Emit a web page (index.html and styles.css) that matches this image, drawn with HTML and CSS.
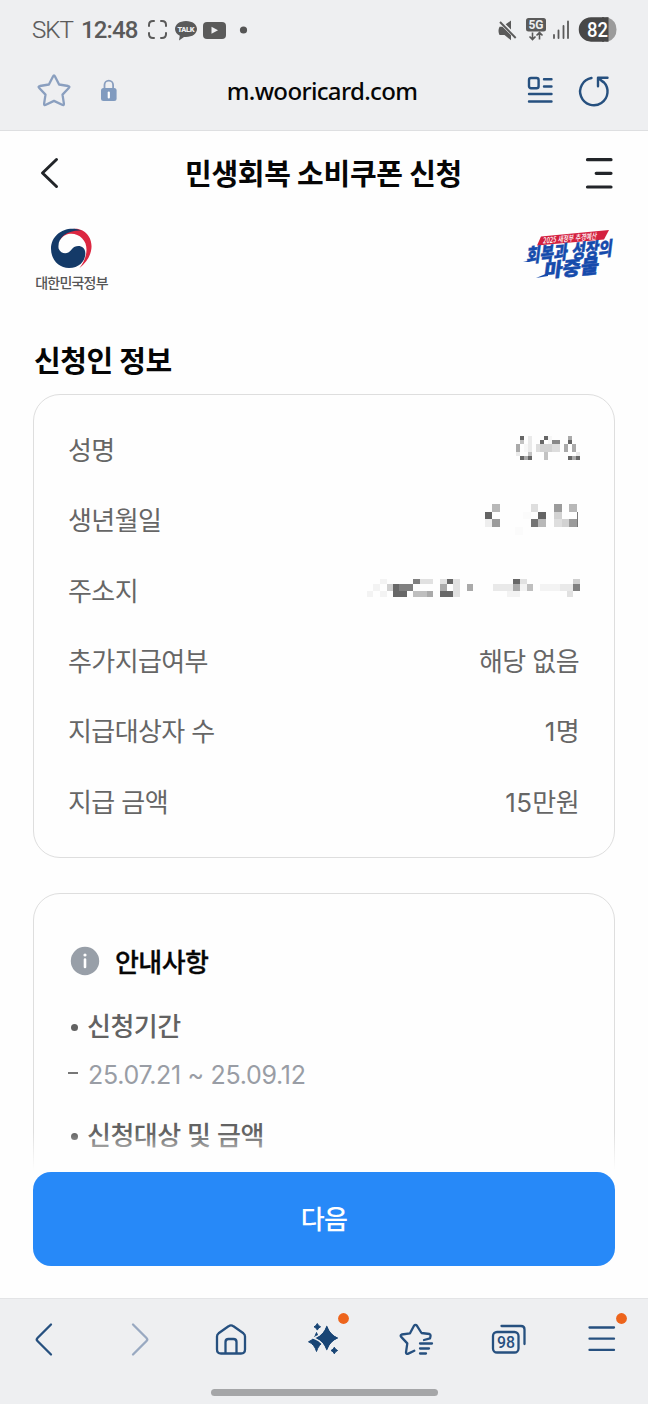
FILE: index.html
```html
<!DOCTYPE html>
<html lang="ko">
<head>
<meta charset="utf-8">
<title>민생회복 소비쿠폰 신청</title>
<link rel="stylesheet" href="styles.css">
</head>
<body>
<div class="phone">
  <header class="browser-top">
    <div class="status">
      <span class="carrier">SKT</span>
      <span class="clock">12:48</span>
      <svg class="status-icons" width="104" height="28" viewBox="0 0 104 28">
        <g fill="none" stroke="#5a5a5a" stroke-width="2" stroke-linecap="round">
          <path d="M2 10V9q0-4 4-4h1M14 5h1q4 0 4 4v1M19 17v1q0 4-4 4h-1M7 22H6q-4 0-4-4v-1"/>
        </g>
        <path d="M39 5c-6.500 0-11 3.600-11 8 0 3 2 5.300 4.800 6.700L32 24.500l5-3.600 2 .1c6.500 0 11-3.600 11-8s-4.500-8-11-8z" fill="#5a5a5a"/>
        <text class="talk" x="39" y="15.500" text-anchor="middle" textLength="17">TALK</text>
        <rect x="56" y="6" width="23" height="17" rx="4" fill="#5a5a5a"/>
        <path d="M64.500 10.800v7l6.500-3.500z" fill="#eeeff1"/>
        <circle cx="96.500" cy="14" r="3.600" fill="#555"/>
      </svg>
      <svg class="status-right" width="120" height="28" viewBox="0 0 120 28">
        <path d="M1.500 10.800h3l8.500 8.500v4.900l-6.500-5.200H1.500Q-.5 15 1.500 10.800zM7.700 8.300L13 4.500v9z" fill="#5a5a5a"/>
        <path d="M2 6l15.700 16" stroke="#5a5a5a" stroke-width="1.900"/>
        <rect x="28" y="2" width="20" height="13.500" rx="2.500" fill="#5a5a5a"/>
        <text class="fiveg" x="38" y="13" text-anchor="middle" textLength="15">5G</text>
        <path d="M34.500 16.500v7M31.500 20.500l3 3 3-3M41.500 23.500v-7M38.500 19.500l3-3 3 3" fill="none" stroke="#5a5a5a" stroke-width="1.600"/>
        <path d="M56 19v3M60.500 14.500V22M65.500 10v12M70 5.500V22" stroke="#5a5a5a" stroke-width="1.800" stroke-linecap="round"/>
        <path d="M93 1.200h13v24.500H93a12.250 12.250 0 0 1 0-24.500z" fill="#484848"/>
        <path d="M110 1.400q8.500 3 8.500 12T110 25.500h-2V1.400z" fill="#9b9b9b"/>
        <rect x="104" y="1.200" width="6.500" height="24.500" fill="#484848"/>
        <text class="battery" x="99.500" y="20.700" text-anchor="middle" textLength="21" lengthAdjust="spacingAndGlyphs">82</text>
      </svg>
    </div>
    <div class="address">
      <svg width="90" height="40" viewBox="0 0 90 40">
        <path d="M18 6.500q1-2 2 0l4.100 8 9 1.500q2.200.5.700 2l-6.300 6.600 1.400 9q.2 2.200-1.800 1.200L19 30.900l-8.100 3.900q-2 1-1.800-1.200l1.400-9-6.300-6.600q-1.500-1.500.7-2l9-1.500z" fill="none" stroke="#8a9fbf" stroke-width="2.300" stroke-linejoin="round"/>
        <path d="M69.500 18.500V15a4.300 4.300 0 0 1 8.600 0v3.500" fill="none" stroke="#8a9fbf" stroke-width="1.800"/>
        <rect x="66" y="18" width="15.600" height="13" rx="2.500" fill="#819bbf"/>
        <path d="M73.800 22.500v5" stroke="#fff" stroke-width="2.200" stroke-linecap="round"/>
      </svg>
      <span class="url">m.wooricard.com</span>
      <svg width="90" height="40" viewBox="0 0 90 40">
        <g fill="none" stroke="#26507f" stroke-width="2.400" stroke-linecap="round" stroke-linejoin="round">
          <rect x="4" y="8" width="9.600" height="10.200" rx="2"/>
          <path d="M19 9.200h7.500M19 16.500h7.500M4 24h22.500M4 31.500h22.500"/>
          <path d="M66.500 8a13.700 13.700 0 1 0 12 3.800M82.500 7.800h-9.500v8.500M73.300 8l4.800 4"/>
        </g>
      </svg>
    </div>
  </header>

  <main class="content">
    <div class="title-bar">
      <svg width="24" height="40" viewBox="0 0 24 40"><path d="M18.500 5.500L4.500 19l14 13.500" fill="none" stroke="#222529" stroke-width="3" stroke-linecap="round" stroke-linejoin="round"/></svg>
      <h1 class="title">민생회복 소비쿠폰 신청</h1>
      <svg width="30" height="40" viewBox="0 0 30 40"><path d="M2.500 5.700H26M11.200 19.300H26M2.500 33H26" stroke="#222529" stroke-width="3.200" stroke-linecap="round"/></svg>
    </div>

    <div class="logos">
      <div class="gov">
        <svg width="43" height="42" viewBox="150 291 129 126">
          <path d="M190 304C214 291 232 291 246 298C281 315 290 370 238 412C263 380 267 342 246 322C229 304 197 302 180 327C178 317 183 309 190 304Z" fill="#dc2741"/>
          <path d="M244 299C202 281 153 308 153 353C153 388 178 411 207 411C237 411 256 391 256 367C256 341 226 340 216 354C204 372 184 370 176 353C170 319 205 296 244 299Z" fill="#143a68"/>
        </svg>
        <span class="gov-name">대한민국정부</span>
      </div>
      <svg class="campaign" width="94" height="56" viewBox="0 0 94 56">
        <path d="M19 8.500L87 2l-5 9.500L15 17.500z" fill="#d4203e"/>
        <g transform="rotate(-5 50 30) skewX(-12)">
          <text class="camp-sub" x="25" y="13" textLength="54" lengthAdjust="spacingAndGlyphs">2025 새정부 추경예산</text>
          <text class="camp-main" x="10.500" y="30.500" textLength="86" lengthAdjust="spacingAndGlyphs">회복과 성장의</text>
          <text class="camp-main" x="30" y="47" textLength="55" lengthAdjust="spacingAndGlyphs">마중물</text>
        </g>
        <path d="M1 34l9-2-3 2zM14 50l12-2v-3z" fill="#164bac"/>
      </svg>
    </div>

    <h2 class="section-title">신청인 정보</h2>
    <dl class="card info">
      <div class="row"><dt>성명</dt><dd>
        <svg class="mosaic" viewBox="0 -15 693 210">
          <path d="M510 47h12v12h-12zM510 107h12v12h-12zM534 107h12v12h-12zM582 47h12v12h-12zM570 60h12v12h-12zM654 60h12v12h-12zM654 107h12v12h-12zM678 107h12v12h-12z" fill="#666"/>
          <path d="M606 60h24v12h-24z" fill="#888"/>
          <path d="M498 72h12v24h-12zM522 107h12v12h-12zM642 72h12v24h-12zM666 72h12v24h-12zM654 47h12v12h-12zM666 107h12v12h-12z" fill="#aaa"/>
          <path d="M510 60h12v12h-12zM534 96h12v12h-12zM582 96h12v24h-12z" fill="#c2c2c2"/>
          <path d="M558 72h72v24h-72z" fill="#ddd"/><path d="M570 72h36v24h-36z" fill="#d2d2d2"/>
          <path d="M534 47h12v49h-12zM498 96h12v12h-12zM678 96h12v12h-12z" fill="#eaeaea"/><path d="M522 72h12v24h-12zM594 47h12v25h-12z" fill="#f7f7f7"/>
        </svg></dd></div>
      <div class="row"><dt>생년월일</dt><dd>
        <svg class="mosaic" viewBox="0 196 693 210">
          <path d="M405 276h21v21h-21zM564 276h24v21h-24z" fill="#646464"/>
          <path d="M543 297h21v24h-21z" fill="#747474"/>
          <path d="M426 297h24v24h-24zM612 252h24v24h-24zM657 297h27v24h-27z" fill="#9b9b9b"/>
          <path d="M426 252h24v24h-24zM564 297h24v24h-24zM657 252h24v24h-24z" fill="#b8b8b8"/>
          <path d="M612 276h24v21h-24zM636 297h21v24h-21z" fill="#d2d2d2"/>
          <path d="M543 252h21v24h-21zM612 297h24v24h-24z" fill="#dedede"/>
          <path d="M405 297h21v24h-21z" fill="#eee"/><path d="M495 321h24v24h-24zM519 276h24v21h-24z" fill="#fbfbfb"/>
          <path d="M681 276h3v45h-3z" fill="#777"/>
        </svg></dd></div>
      <div class="row"><dt>주소지</dt><dd>
        <svg class="mosaic" viewBox="0 407 693 210">
          <path d="M129 492h60v21h-18v18h-42zM291 477h18v15h-18zM270 513h39v18h-39zM489 477h21v15h-21z" fill="#686868"/>
          <path d="M147 492h42v21h-42zM189 477h21v15h-21zM669 492h21v21h-21z" fill="#808080"/>
          <path d="M231 513h18v18h-18zM270 492h21v21h-21zM351 492h18v21h-18zM489 492h21v21h-21z" fill="#aaa"/>
          <path d="M189 513h42v18h-42zM531 492h18v21h-18z" fill="#bfbfbf"/>
          <path d="M111 492h18v21h-18zM669 477h21v15h-21z" fill="#d0d0d0"/>
          <path d="M210 477h39v15h-39zM270 477h21v15h-21zM309 477h21v54h-21zM510 477h21v15h-21zM651 513h18v18h-18z" fill="#e1e1e1"/>
          <path d="M429 492h60v21h-60zM630 492h39v21h-39z" fill="#e9e9e9"/>
          <path d="M51 513h18v18h-18zM69 492h21v21h-21zM90 477h21v15h-21zM90 513h21v18h-21zM471 513h39v18h-39zM510 492h21v21h-21zM570 492h60v21h-60z" fill="#f3f3f3"/>
        </svg></dd></div>
      <div class="row"><dt>추가지급여부</dt><dd class="value">해당 없음</dd></div>
      <div class="row"><dt>지급대상자 수</dt><dd class="value"><span class="num">1</span>명</dd></div>
      <div class="row"><dt>지급 금액</dt><dd class="value"><span class="num">15</span>만원</dd></div>
    </dl>

    <section class="card notice">
      <div class="notice-head">
        <svg class="info-icon" width="30" height="30" viewBox="0 0 30 30"><circle cx="15" cy="15" r="14.200" fill="#989fa8"/><path d="M15 13.500v7.500" stroke="#fff" stroke-width="2.600" stroke-linecap="round"/><circle cx="15" cy="9" r="1.600" fill="#fff"/></svg>
        <h3 class="notice-title">안내사항</h3>
      </div>
      <p class="topic"><span>신청기간</span></p>
      <p class="period">25.07.21 ~ 25.09.12</p>
      <p class="topic"><span>신청대상 및 금액</span></p>
    </section>

    <div class="action">
      <button class="next" type="button">다음</button>
    </div>
  </main>

  <footer class="browser-bottom">
    <nav class="tools">
      <svg viewBox="0 0 44 44"><path d="M27 7.500L13.500 21q-1.500 1.500 0 3L27 37.500" class="line"/></svg>
      <svg viewBox="0 0 44 44"><path d="M16 7.500L29.500 21q1.500 1.500 0 3L16 37.500" class="line faded"/></svg>
      <svg viewBox="0 0 44 44"><path d="M8 19.500q0-2 1.600-3.200L19.500 9.300q2.500-1.900 5 0l9.900 7q1.600 1.200 1.600 3.200v13q0 4-4 4H12q-4 0-4-4zM16.500 36.500V25q0-3 3-3h5q3 0 3 3v11.500" class="line"/></svg>
      <svg viewBox="0 0 44 44">
        <g fill="#184575">
          <path d="M14.500 15.500Q16.500 22.300 22.500 24.800Q16.500 27.300 14.500 34.500Q12.500 27.300 6.500 24.800Q12.500 22.300 14.500 15.500z" stroke="#184575" stroke-width="1"/>
          <path d="M24.800 8.500Q28 18 36 21Q28 24 24.800 33.500Q21.600 24 13.500 21Q21.600 18 24.800 8.500z" stroke="#eeeff1" stroke-width="3.200" paint-order="stroke"/>
          <path d="M24.800 9.500Q28 18 35.500 21Q28 24 24.800 32.500Q21.600 24 15 21Q21.600 18 24.800 9.500z" stroke="#184575" stroke-width="1"/>
          <path d="M15.300 6.500q1 2.500 3.300 3.300-2.300.8-3.300 3.300-1-2.500-3.300-3.300 2.300-.8 3.300-3.300zM32.300 30.200q1 2.500 3.300 3.300-2.300.8-3.300 3.300-1-2.500-3.300-3.300 2.300-.8 3.300-3.300z" stroke="#184575" stroke-width="1"/>
        </g>
        <circle cx="41.500" cy="1.500" r="5.400" fill="#ed641c"/>
      </svg>
      <svg viewBox="0 0 44 44"><path d="M29 23l6-1.600q1.300-3.800-.5-4.400l-8-1-4.500-7.200q-1.500-2-3 0l-4 7.500-8.300 1.200q-1.800.7-.5 2.400l6.100 6.500-1.300 9q.2 2.200 2.300 1.200l6-2.900M25 26.500h12M25 31.500h9M25 36.500h6" class="line"/></svg>
      <svg viewBox="0 0 44 44"><rect x="6" y="15" width="25.500" height="20.500" rx="4" class="line"/><path d="M14.500 9H34q3.500 0 3.500 3.500V27" class="line"/><text class="tabs" x="19" y="31.300" text-anchor="middle" textLength="18" lengthAdjust="spacingAndGlyphs">98</text></svg>
      <svg viewBox="0 0 44 44"><path d="M9.500 10.500h24.500M9.500 21.700h24.500M9.500 32.900h24.500" class="line"/><circle cx="41.500" cy="1.500" r="5.400" fill="#ed641c"/></svg>
    </nav>
    <div class="handle"></div>
  </footer>
</div>
</body>
</html>
```

FILE: styles.css
```css
* { box-sizing: border-box; margin: 0; padding: 0; }
body { font-family: Inter, "Noto Sans CJK KR", sans-serif; background: #fefefe; }
svg { display: block; flex: none; overflow: visible; }
.phone { width: 648px; height: 1404px; display: flex; flex-direction: column; overflow: hidden; }

.browser-top { height: 131px; background: #eeeff1; border-bottom: 1px solid #dedfe1; flex: none; }
.status { height: 60px; display: flex; align-items: center; padding-left: 32px; padding-right: 30px; color: #5a5a5a; font-family: Roboto, sans-serif; font-size: 24px; line-height: 30px; }
.carrier { width: 49px; font-weight: 300; letter-spacing: -0.9px; -webkit-text-stroke: 0.2px #5a5a5a; }
.clock { width: 66px; font-weight: 500; letter-spacing: -0.9px; }
.status-right { margin-left: auto; }
.talk { font: 900 7.5px Roboto, sans-serif; fill: #eeeff1; }
.fiveg { font: 700 12px Roboto, sans-serif; fill: #eeeff1; }
.battery { font: 500 20px Roboto, sans-serif; fill: #fff; }
.address { height: 60px; display: flex; align-items: center; justify-content: space-between; padding: 0 33px 0 35px; }
.url { font: 500 24px/36px "Noto Sans", sans-serif; color: #060606; letter-spacing: -0.65px; padding: 2px 6px 0 0; }

.content { flex: 1; position: relative; overflow: hidden; padding: 0 33px; }
.title-bar { height: 86px; display: flex; align-items: center; justify-content: space-between; padding-left: 5px; }
.title { font-size: 29px; line-height: 40px; font-weight: 700; letter-spacing: -0.3px; color: #060606; padding-top: 1px; }
.logos { height: 90px; display: flex; justify-content: space-between; padding-top: 11px; }
.gov { width: 77px; display: flex; flex-direction: column; align-items: center; }
.gov-name { font-size: 14px; line-height: 22px; font-weight: 500; color: #555; letter-spacing: -0.8px; margin-top: 2px; white-space: nowrap; }
.campaign { margin-right: -1px; }
.camp-sub { font: 500 8px "Noto Sans CJK KR", sans-serif; fill: #fff; }
.camp-main { font: 900 19px "Noto Sans CJK KR", sans-serif; fill: #164bac; stroke: #164bac; stroke-width: .5px; }
.section-title { margin-top: 35px; padding-left: 1px; font-size: 29px; line-height: 40px; font-weight: 700; letter-spacing: -0.4px; color: #060606; }

.card { border: 1px solid #dedede; border-radius: 27px; }
.info { height: 464px; margin-top: 12px; padding: 20px 34px; }
.row { height: 70.3px; display: flex; align-items: center; justify-content: space-between; font-size: 26px; line-height: 38px; letter-spacing: -0.6px; color: #666; }
.row dt, .value { padding-top: 2px; }
.value { padding-right: 1px; }
.num { letter-spacing: 0.4px; }
.mosaic { width: 231px; height: 70px; margin-right: -1px; shape-rendering: crispEdges; }
.notice { height: 464px; margin-top: 35px; padding: 52px 34px; }
.notice-head { display: flex; align-items: center; gap: 15px; padding-left: 2px; height: 33px; }
.info-icon { margin-bottom: 4px; }
.notice-title { font-size: 26px; line-height: 33px; font-weight: 500; letter-spacing: -0.6px; color: #060606; -webkit-text-stroke: 0.3px #060606; }
.topic { display: flex; align-items: center; height: 40px; margin-top: 27px; padding-left: 3px; font-size: 26px; line-height: 40px; font-weight: 500; letter-spacing: -0.5px; color: #626262; }
.topic span { padding-top: 2px; }
.topic::before { content: ""; width: 7px; height: 7px; border-radius: 50%; background: #626262; margin-right: 9px; margin-top: 3px; }
.period { display: flex; align-items: center; height: 40px; margin-top: 9px; font-size: 25px; line-height: 40px; color: #999da5; letter-spacing: -0.3px; }
.period::before { content: ""; width: 10px; height: 2px; background: #777; margin-right: 10px; margin-top: -4px; }
.period + .topic { margin-top: 20px; }

.action { position: absolute; left: 0; right: 0; bottom: 0; padding: 40px 33px 32px; background: linear-gradient(rgba(254,254,254,0), #fefefe 38px); }
.next { display: block; width: 100%; height: 94.5px; padding-bottom: 2px; border: 0; border-radius: 18px; background: #2789f8; color: #fff; font: 500 26px/38px "Noto Sans CJK KR", sans-serif; letter-spacing: -0.6px; }

.browser-bottom { height: 106px; flex: none; background: #eeeff1; border-top: 1px solid #e3e4e6; }
.tools { height: 80px; display: grid; grid-template-columns: repeat(7, 1fr); align-items: center; justify-items: center; }
.tools svg { width: 44px; height: 44px; }
.line { fill: none; stroke: #26507f; stroke-width: 2.3px; stroke-linecap: round; stroke-linejoin: round; }
.faded { stroke: #99a9c1; }
.tabs { font: 500 17px Roboto, sans-serif; fill: #26507f; }
.handle { width: 227px; height: 7px; border-radius: 4px; background: #a5a6a8; margin: 10px auto 0; }
```
